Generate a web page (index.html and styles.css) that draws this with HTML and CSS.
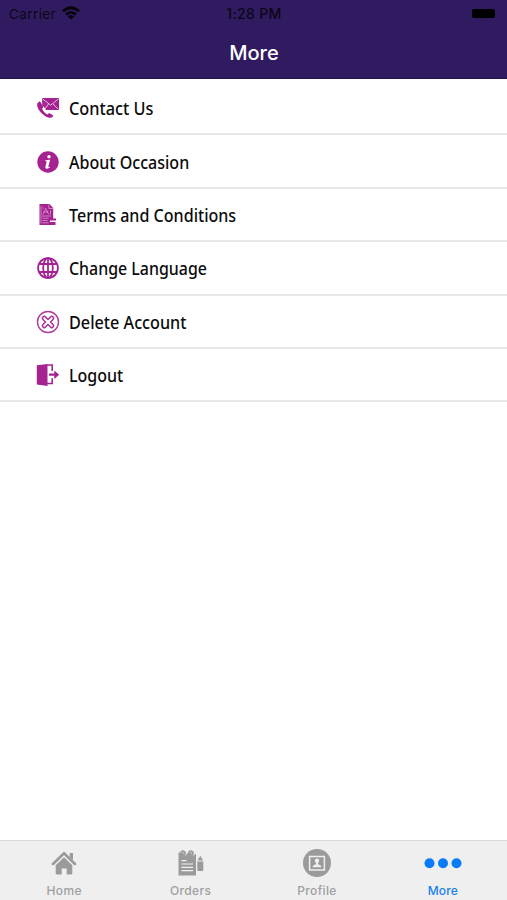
FILE: index.html
```html
<!DOCTYPE html>
<html lang="en">
<head>
<meta charset="utf-8">
<title>More</title>
<link rel="stylesheet" href="styles.css">
</head>
<body>
<header class="header">
  <div class="status">
    <div class="carrier"><span>Carrier</span>
      <svg class="wifi" viewBox="0 0 18 14"><g fill="none" stroke="#050308" stroke-width="2.7"><path d="M1 5.2Q9-1.7 17 5.2"/><path d="M4 8.5Q9 4.1 14 8.5"/></g><path d="M5.9 10.4Q9 7.8 12.1 10.4L9 13.6Z" fill="#050308"/></svg>
    </div>
    <div class="time">1:28 PM</div>
    <div class="power"><i class="battery"></i></div>
  </div>
  <h1 class="title">More</h1>
</header>
<main class="list">
  <a class="row"><svg class="icon" viewBox="0 0 24 24"><path d="M6 2h17v12H10L8 11 6.3 9.5Z"/><path d="M6.5 2.8l8.2 6.4L22.5 2.8M8.5 13.3l4.2-5.5M22.3 13.3l-5.4-5.5" fill="none" stroke="#fff" stroke-width=".7"/><path d="M2.6 6L1.2 7.5C.1 12.3 6.5 20.3 13.2 21.7c2 .3 3.6-.6 4.3-2l-4.2-2.8-2 1.5c-2.1-.8-4.4-3.5-5.1-5.7l1.2-1.7L4.7 6.3C4 5.4 3.3 5.3 2.6 6Z"/></svg><span class="label l1">Contact Us</span></a>
  <a class="row"><svg class="icon" viewBox="0 0 24 24"><circle cx="12" cy="12" r="10.7"/><g fill="#fff"><circle cx="13" cy="6.7" r="1.7"/><path d="M9.4 10.2l4.7-.5-1.8 7.1c0 .6.7.5 1.7-.2l-.2 1c-1.6 1.4-4.8 1.6-4.4-.7l1.2-5.2c0-.7-.5-.8-1.4-.7Z"/></g></svg><span class="label l2">About Occasion</span></a>
  <a class="row"><svg class="icon" viewBox="0 0 24 24"><path d="M3.5 1h10l3.7 4v10.5H20v2h-6v1.5h5.5V22H3.5Z"/><g fill="none" stroke="#fff" stroke-width=".8" opacity=".55"><path d="M5 2.8v17.6M12.8 1.5v4H17M6.8 11.5l3-6 3 6M7.5 9h4.6M6 13h9M6.5 15.2h6M6.5 17.5h5M6.5 19.8h6M6.7 5h1.5M14.5 7.5v4"/></g></svg><span class="label l3">Terms and Conditions</span></a>
  <a class="row"><svg class="icon" viewBox="0 0 24 24"><g fill="none" stroke="#a52390" stroke-width="1.8"><circle cx="12" cy="12" r="9.9"/><ellipse cx="12" cy="12" rx="4.8" ry="9.9"/><path d="M12 2v20M3.2 8h17.6M3.2 16h17.6"/></g></svg><span class="label l4">Change Language</span></a>
  <a class="row"><svg class="icon" viewBox="0 0 24 24"><g fill="none" stroke="#b03a9f" stroke-width="1.4"><circle cx="12" cy="12" r="10.5"/></g><g fill="none" stroke-linecap="round"><path d="M8.2 8.2l7.6 7.6M15.8 8.2l-7.6 7.6" stroke="#a92c96" stroke-width="5"/><path d="M8.2 8.2l7.6 7.6M15.8 8.2l-7.6 7.6" stroke="#fff" stroke-width="2.1"/></g></svg><span class="label l5">Delete Account</span></a>
  <a class="row"><svg class="icon" viewBox="0 0 24 24"><path d="M.8 2.2L11.5 1v22L.8 21.6Z"/><path d="M11 2h5.2v6M11 20.5h5.2v-5.3" fill="none" stroke="#a52390" stroke-width="1.6"/><path d="M13 10.6h5.3V7.5l4.9 4.2-4.9 4.2v-3.1H13Z"/></svg><span class="label l6">Logout</span></a>
</main>
<nav class="tabs">
  <a class="tab"><svg class="tabicon" viewBox="0 0 30 30"><path d="M4 16L15 5.2 26 16" fill="none" stroke="#9b9b9b" stroke-width="2.6" stroke-linecap="round" stroke-linejoin="round"/><path d="M20.7 5H24v7l-3.3-3ZM15 9.3l8.3 8v7.8q0 1.5-1.5 1.5H17.7v-6h-5v6H8.2q-1.5 0-1.5-1.5v-7.8Z" fill="#9b9b9b"/></svg><span>Home</span></a>
  <a class="tab"><svg class="tabicon" viewBox="0 0 30 30"><g fill="#9b9b9b"><path d="M2.5 4.5h17.5v23H2.5Z"/><path d="M21.3 13.5h6V22q0 1-1 1h-4q-1 0-1-1ZM21.5 12.5l2.8-4.7 2.8 4.7Z"/></g><path d="M5.5 12.6h5M5.5 16H17M5.5 19.3H17M5.5 22.6H17" stroke="#efefef" stroke-width="1.2"/><path d="M8 3h3.5v2.2L9.7 7.5 7.5 7ZM16 3h4.5v2l-2.7 2.5L15.5 7Z" fill="#efefef"/><g fill="none" stroke="#9b9b9b" stroke-width="1.8"><path d="M4.5 4.5q2.2-2.3 4-.5T6.7 8M12.5 4.5q2.2-2.3 4-.5t-1.8 4"/></g></svg><span>Orders</span></a>
  <a class="tab"><svg class="tabicon" viewBox="0 0 30 30"><circle cx="15" cy="15" r="14" fill="#9b9b9b"/><path d="M7.6 8.5h14.8v13.5H7.6Z" fill="none" stroke="#efefef" stroke-width="1.5"/><circle cx="15" cy="12.7" r="2.2" fill="#efefef"/><path d="M10.8 19.3v-1q.4-1.5 3.2-2v-2h2v2q2.8.5 3.2 2v1Z" fill="#efefef"/></svg><span>Profile</span></a>
  <a class="tab active"><svg class="dots" viewBox="0 0 38 30"><g fill="#087bf6"><circle cx="5.5" cy="15.2" r="5"/><circle cx="19" cy="15.2" r="5"/><circle cx="32.5" cy="15.2" r="5"/></g></svg><span>More</span></a>
</nav>
</body>
</html>
```
FILE: styles.css
```css
* { box-sizing: border-box; }
body { margin: 0; height: 900px; display: flex; flex-direction: column; background: #fff; font-family: Inter, "Liberation Sans", sans-serif; overflow: hidden; }
.header { height: 79px; background: #301b61; border-bottom: 1px solid #24124f; flex: none; }
.status { height: 27px; display: grid; grid-template-columns: 1fr 1fr 1fr; align-items: center; padding: 0 9px; color: #0b0616; font-size: 13.5px; }
.carrier { display: flex; align-items: center; gap: 6px; letter-spacing: .4px; }
.wifi { width: 18px; height: 14px; margin-top: -2px; }
.time { text-align: center; font-weight: 550; font-size: 14px; letter-spacing: .35px; padding-left: 1px; }
.power { display: flex; justify-content: flex-end; padding-right: 3px; }
.battery { width: 23px; height: 9px; background: #000; border-radius: 2px; }
.title { margin: 0; color: #fff; text-align: center; font-size: 20px; line-height: 52px; font-weight: 550; padding-left: 1px; }
.list { flex: 1; padding-top: 3px; }
.row { height: 53.4px; display: flex; align-items: center; padding: 1px 0 0 36px; border-bottom: 2px solid #e8e8e8; }
.icon { width: 24px; height: 24px; fill: #a52390; margin-right: 9px; flex: none; }
.label { font: 500 18px/30px "Noto Sans", sans-serif; color: #0c0c0c; white-space: nowrap; transform-origin: left center; }
.l1 { transform: scaleX(.905); }
.l2 { transform: scaleX(.892); }
.l3 { transform: scaleX(.893); }
.l4 { transform: scaleX(.885); }
.l5 { transform: scaleX(.9); }
.l6 { transform: scaleX(.89); }
.tabs { height: 60px; flex: none; display: grid; grid-template-columns: repeat(4, 126.4px); padding-left: 1px; background: #efefef; border-top: 1px solid #d8d8d8; }
.tab { display: flex; flex-direction: column; align-items: center; padding-top: 7px; color: #a0a0a0; font-size: 12px; line-height: 16px; font-weight: 500; letter-spacing: .35px; }
.tabicon { width: 30px; height: 30px; margin-bottom: 5px; }
.dots { width: 38px; height: 30px; margin-bottom: 5px; }
.tab.active { color: #1781ee; letter-spacing: .2px; padding-right: 1px; }
```
